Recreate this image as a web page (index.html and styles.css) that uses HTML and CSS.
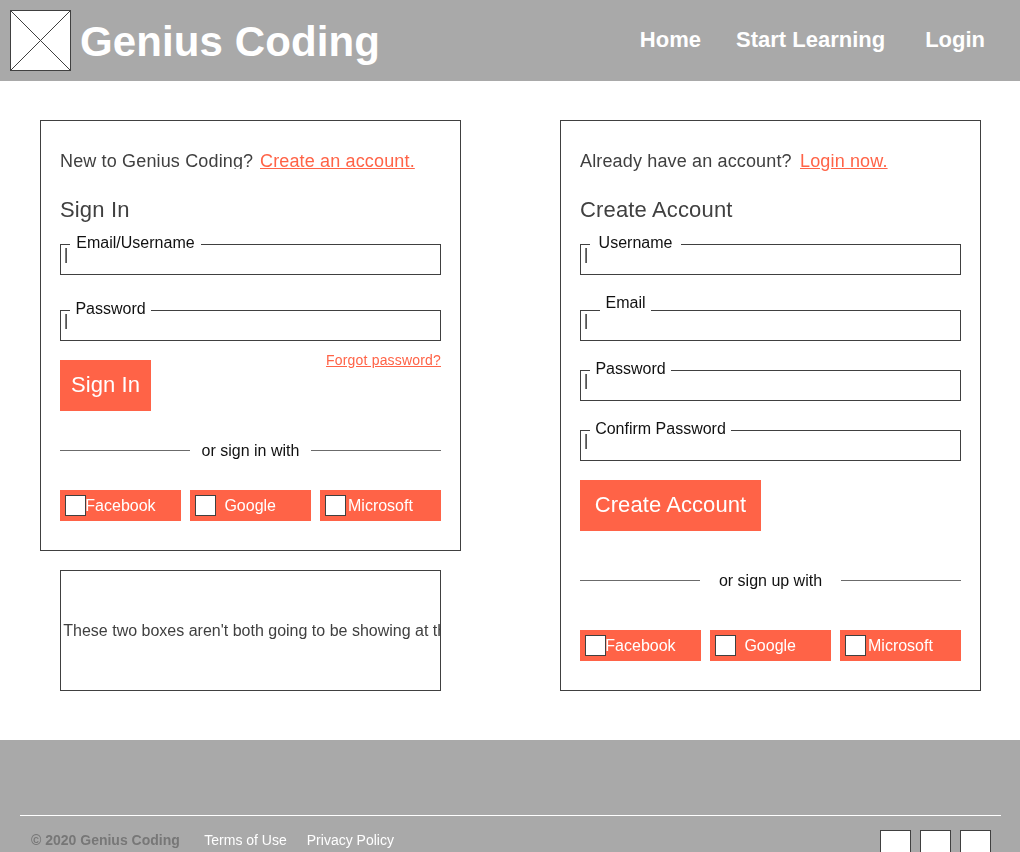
FILE: index.html
```html
<!DOCTYPE html>
<html lang="en">
<head>
<meta charset="utf-8">
<title>Genius Coding</title>
<link rel="stylesheet" href="styles.css">
</head>
<body>
<header class="header">
  <svg class="logo" width="61" height="61" viewBox="0 0 61 61" shape-rendering="crispEdges"><rect x=".5" y=".5" width="60" height="60" fill="#fff" stroke="#404040"/><path d="M.5 .5l60 60M60.5 .5l-60 60" stroke="#404040" fill="none"/></svg>
  <h1 class="brand">Genius Coding</h1>
  <nav class="nav"><a class="nav-home">Home</a><a class="nav-learn">Start Learning</a><a>Login</a></nav>
</header>
<main class="main">
  <div class="column">
    <section class="card card-login">
      <p class="intro"><span class="intro-text intro-clip">New to Genius Coding?</span><a class="link">Create an account.</a></p>
      <h2 class="title">Sign In</h2>
      <div class="field field-first"><label class="label w131">Email/Username</label><span class="caret">|</span></div>
      <div class="field gap35"><label class="label w81">Password</label><span class="caret">|</span></div>
      <div class="actions"><button class="submit submit-login">Sign In</button><a class="link forgot">Forgot password?</a></div>
      <div class="divider divider-login"><span class="divider-text w121">or sign in with</span></div>
      <div class="social">
        <button class="provider"><i class="box"></i><span class="facebook">Facebook</span></button>
        <button class="provider"><i class="box"></i><span class="google">Google</span></button>
        <button class="provider"><i class="box"></i><span class="microsoft">Microsoft</span></button>
      </div>
    </section>
    <aside class="note">These two boxes aren't both going to be showing at the same time.</aside>
  </div>
  <section class="card card-signup">
    <p class="intro"><span class="intro-text intro-wide">Already have an account?</span><a class="link">Login now.</a></p>
    <h2 class="title">Create Account</h2>
    <div class="field field-first"><label class="label w91">Username</label><span class="caret">|</span></div>
    <div class="field gap35"><label class="label label-email">Email</label><span class="caret">|</span></div>
    <div class="field gap29"><label class="label w81">Password</label><span class="caret">|</span></div>
    <div class="field gap29"><label class="label w141">Confirm Password</label><span class="caret">|</span></div>
    <div class="actions"><button class="submit submit-signup">Create Account</button></div>
    <div class="divider divider-signup"><span class="divider-text w141">or sign up with</span></div>
    <div class="social">
      <button class="provider"><i class="box"></i><span class="facebook">Facebook</span></button>
      <button class="provider"><i class="box"></i><span class="google">Google</span></button>
      <button class="provider"><i class="box"></i><span class="microsoft">Microsoft</span></button>
    </div>
  </section>
</main>
<footer class="footer">
  <div class="footer-row">
    <strong class="copyright">© 2020 Genius Coding</strong>
    <a class="terms">Terms of Use</a><a>Privacy Policy</a>
    <div class="badges"><i class="badge"></i><i class="badge"></i><i class="badge"></i></div>
  </div>
</footer>
</body>
</html>
```
FILE: styles.css
```css
* { box-sizing: border-box; }
html, body { height: 100%; }
body { margin: 0; overflow: hidden; background: #fff; color: #111; font-family: "Liberation Sans", Arial, sans-serif; font-size: 16px; }
h1, h2, p { margin: 0; font-weight: normal; }
button { margin: 0; padding: 0; border: 0; font: inherit; color: #fff; background: #ff6347; }

.header { display: flex; align-items: flex-start; height: 81px; padding: 10px 35px 0 10px; background: #a9a9a9; color: #fff; }
.logo { display: block; flex: none; }
.brand { margin: 7px 0 0 9px; font-size: 42px; font-weight: bold; line-height: 50px; letter-spacing: .1px; white-space: nowrap; }
.nav { display: flex; margin: 17px 0 0 auto; font-size: 22px; font-weight: bold; line-height: 26px; white-space: nowrap; }
.nav-home { margin-right: 35px; }
.nav-learn { margin-right: 40px; }

.main { display: flex; gap: 99px; align-items: flex-start; height: 659px; padding: 39px 39px 0 40px; will-change: transform; }
.column { width: 421px; }
.card { width: 421px; border: 1px solid #404040; padding: 30px 19px 0; }
.card-login { height: 431px; }
.card-signup { height: 571px; }
.intro { display: flex; height: 20px; font-size: 18px; line-height: 20px; color: #404040; white-space: nowrap; letter-spacing: .15px; }
.intro-text { width: 200px; }
.intro-clip { height: 18px; overflow: hidden; }
.intro-wide { width: 220px; }
.link { color: #ff6347; text-decoration: underline; }
.title { margin-top: 26px; font-size: 22px; line-height: 26px; letter-spacing: .15px; color: #404040; }

.field { position: relative; height: 31px; border: 1px solid #404040; padding-left: 3px; }
.field-first { margin-top: 21px; }
.gap35 { margin-top: 35px; }
.gap29 { margin-top: 29px; }
.label { position: absolute; left: 9px; top: -12px; height: 19px; line-height: 19px; text-align: center; background: #fff; white-space: nowrap; }
.label-email { left: 19px; width: 51px; top: -18px; }
.w81 { width: 81px; }
.w91 { width: 91px; }
.w121 { width: 121px; }
.w131 { width: 131px; }
.w141 { width: 141px; }
.caret { display: block; line-height: 19px; color: #111; }

.actions { display: flex; justify-content: space-between; align-items: flex-start; margin-top: 19px; }
.submit { height: 51px; padding-bottom: 2px; font-size: 22px; line-height: 49px; letter-spacing: .08px; }
.submit-login { width: 91px; }
.submit-signup { width: 181px; }
.forgot { margin-top: -8px; font-size: 14px; line-height: 16px; letter-spacing: .18px; }

.divider { display: flex; align-items: center; height: 19px; }
.divider::before, .divider::after { content: ""; flex: 1; height: 1px; background: #6b6b6b; }
.divider-text { line-height: 19px; text-align: center; }
.divider-login { margin: 30px 0; }
.divider-signup { margin: 40px 0; }
.social { display: flex; gap: 9px; }
.provider { display: flex; width: 121px; height: 31px; padding: 5px; line-height: 22px; }
.box { flex: none; width: 21px; height: 21px; border: 1px solid #404040; background: #fff; }
.facebook { margin-left: -.7px; }
.google { margin-left: 8.4px; }
.microsoft { margin-left: 2px; }
.note { width: 381px; height: 121px; margin: 19px 0 0 20px; border: 1px solid #404040; padding-left: 2.3px; line-height: 119px; overflow: hidden; white-space: nowrap; color: #404040; }

.footer { height: 112px; padding: 75px 19px 0 20px; background: #a9a9a9; overflow: hidden; }
.footer-row { display: flex; align-items: flex-start; border-top: 1px solid #fff; padding: 14px 10px 0 11px; font-size: 14px; line-height: 20px; color: #fff; will-change: transform; }
.copyright { width: 173.3px; color: #777; }
.terms { margin-right: 20px; }
.badges { display: flex; gap: 9px; margin-left: auto; }
.badge { width: 31px; height: 31px; border: 1px solid #404040; background: #fff; }
```
